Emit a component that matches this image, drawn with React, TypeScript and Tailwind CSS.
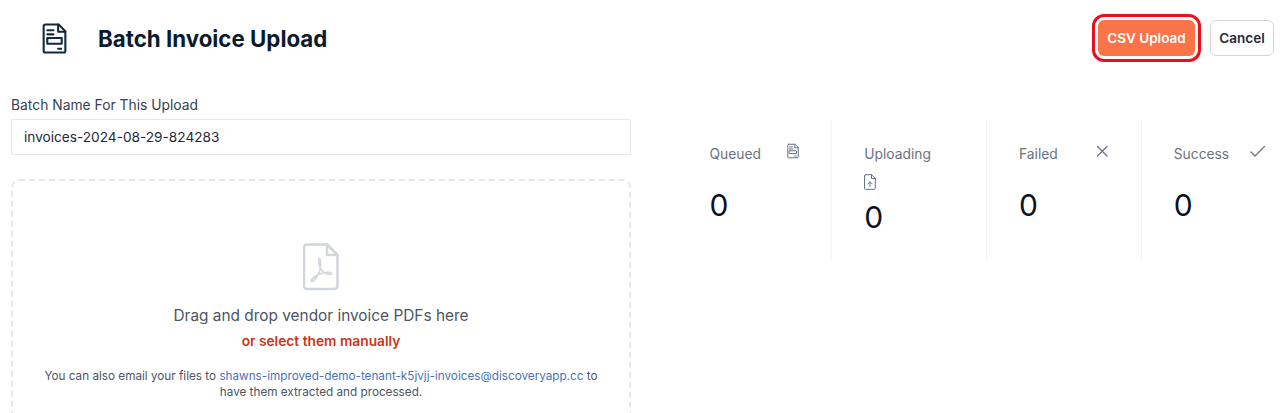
const DocIcon = ({ className }: { className: string }) => (
  <svg viewBox="0 0 24 30" fill="none" stroke="currentColor" strokeWidth="2" strokeLinejoin="round" strokeLinecap="round" className={className}>
    <path d="M3 1.500h13l6.500 6.500v19a1.500 1.500 0 0 1-1.500 1.500H3A1.500 1.500 0 0 1 1.500 27V3A1.500 1.500 0 0 1 3 1.500Z" />
    <path d="M15.500 1.500v7h7" />
    <path d="M5 7h6M5 11h6M15.500 25h3" />
    <rect x="5" y="14.500" width="14" height="5.500" />
  </svg>
);

const UploadDocIcon = () => (
  <svg viewBox="0 0 12 16" fill="none" stroke="currentColor" strokeWidth="1" strokeLinejoin="round" strokeLinecap="round" className="h-4 w-3 text-gray-500">
    <path d="M1.500.7h6l3.800 3.800v9.800a1 1 0 0 1-1 1h-8.800a1 1 0 0 1-1-1V1.700a1 1 0 0 1 1-1Z" />
    <path d="M7.500.7v3.800h3.800" />
    <path d="M6 12.500V8M3.800 10 6 7.800 8.200 10" />
  </svg>
);

const PdfIcon = () => (
  <svg viewBox="0 0 36 48" fill="none" stroke="currentColor" strokeWidth="2.500" strokeLinejoin="round" strokeLinecap="round" className="h-12 w-9 text-gray-300">
    <path d="M4 1.500h20l10.500 10.500v31a3 3 0 0 1-3 3H4a3 3 0 0 1-3-3V4.500a3 3 0 0 1 3-3Z" />
    <path d="M24 1.500V12h10.500" />
    <path strokeWidth="1.600" d="M16.500 15.500c-1.500 0-1 5 .5 8.500 2 4.500 6 7.500 10 7.500 2 0 2-1.500 0-2-4-1-11 1-15 4-3 2.300-4.500 4.500-3.500 5 1.500.7 5-3 7.500-8.500 2-4.500 2-14.500.5-14.500Z" />
  </svg>
);

const CrossIcon = () => (
  <svg viewBox="0 0 16 16" fill="none" stroke="currentColor" strokeWidth="1.300" strokeLinecap="round" className="h-4 w-4 text-gray-500">
    <path d="M4.500 3.500l9.500 9.500M14 3.500 4.500 13" />
  </svg>
);

const CheckIcon = () => (
  <svg viewBox="0 0 16 16" fill="none" stroke="currentColor" strokeWidth="1.200" strokeLinecap="round" strokeLinejoin="round" className="h-4 w-4 text-gray-500">
    <path d="M2 9l4 4L15.500 3.500" />
  </svg>
);

const stats = [
  { label: "Queued", icon: <DocIcon className="h-4 w-3 text-gray-500" />, wrap: false },
  { label: "Uploading", icon: <UploadDocIcon />, wrap: true },
  { label: "Failed", icon: <CrossIcon />, wrap: false },
  { label: "Success", icon: <CheckIcon />, wrap: false },
];

export default function App() {
  return (
    <main className="h-[413px] w-[1280px] overflow-hidden bg-white font-['Inter',sans-serif] text-[#111827]">
      <header className="flex h-[76px] items-center pl-[42px] pr-[6px]">
        <DocIcon className="h-[31px] w-[25px] text-[#0f2a3d]" />
        <h1 className="ml-[31px] pt-[1px] text-[22.3px] font-bold text-[#0b1b2e]">Batch Invoice Upload</h1>
        <div className="ml-auto flex items-center gap-[9px]">
          <div className="rounded-[12px] border-[3px] border-[#e8101f] p-[3px]">
            <button className="h-[36px] w-[97px] rounded-[6px] bg-[#fb7348] text-[13.5px] font-semibold text-white">CSV Upload</button>
          </div>
          <button className="h-[36px] w-[64px] rounded-[6px] border border-gray-300 bg-white text-[13.5px] font-semibold text-[#1f2937]">Cancel</button>
        </div>
      </header>

      <div className="flex items-start">
        <section className="ml-[11px] w-[620px] shrink-0">
          <label className="block pt-[19px] text-[13.85px] leading-[20px] text-[#374151]">Batch Name For This Upload</label>
          <input
            readOnly
            value="invoices-2024-08-29-824283"
            className="mt-[4px] h-[36px] w-full border border-gray-200 px-3 text-[13.65px] text-[#1f2937]"
          />
          <div className="mt-[24px] flex h-[300px] flex-col items-center rounded-lg border-2 border-dashed border-gray-200 px-[25px] pt-[62px]">
            <PdfIcon />
            <p className="mt-[13px] text-[15.4px] leading-[24px] text-[#4b5563]">Drag and drop vendor invoice PDFs here</p>
            <p className="mt-[3px] text-[13.75px] font-semibold leading-[20px] text-[#c9361b]">or select them manually</p>
            <p className="mt-[17px] text-center text-[11.72px] leading-[16px] text-[#4b5563]">
              You can also email your files to{" "}
              <span className="text-[#4a72b8]">shawns-improved-demo-tenant-k5jvjj-invoices@discoveryapp.cc</span> to have them extracted and processed.
            </p>
          </div>
        </section>

        <section className="ml-[46.500px] mt-[44px] grid h-[140px] w-[619px] shrink-0 grid-cols-4 divide-x divide-gray-100">
          {stats.map((stat) => (
            <div key={stat.label} className="px-8 pt-[23px]">
              <div className={stat.wrap ? "flex flex-col items-start gap-[10px]" : "flex items-start justify-between"}>
                <span className="mt-[1px] text-[13.8px] leading-[20px] text-[#6b7280]">{stat.label}</span>
                {stat.icon}
              </div>
              <div className={stat.wrap ? "mt-[9px] text-3xl leading-[36px] text-[#0b1220]" : "mt-[23px] text-3xl leading-[36px] text-[#0b1220]"}>0</div>
            </div>
          ))}
        </section>
      </div>
    </main>
  );
}
